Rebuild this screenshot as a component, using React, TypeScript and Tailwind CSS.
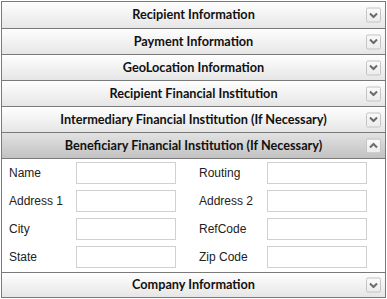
import React from "react";

type Section = { title: string; open?: boolean; first?: boolean };

function Chevron({ up }: { up?: boolean }) {
  return (
    <span className="absolute right-[4px] top-1/2 -translate-y-1/2 flex h-[15px] w-[15px] items-center justify-center rounded-[2px] border border-[#c4c4c4] bg-[linear-gradient(#fafafa,#ececec)]">
      <svg width="9" height="6" viewBox="0 0 9 6">
        {up ? (
          <path d="M1 5 L4.5 1.5 L8 5" fill="none" stroke="#6a6a6a" strokeWidth="2" />
        ) : (
          <path d="M1 1 L4.5 4.5 L8 1" fill="none" stroke="#6a6a6a" strokeWidth="2" />
        )}
      </svg>
    </span>
  );
}

function Header({ title, open, first }: Section) {
  return (
    <div
      className={`relative flex items-center justify-center border-b border-[#7a7a7a] ${
        first ? "h-[27px]" : "h-[26px]"
      } ${
        open
          ? "bg-[linear-gradient(#e2e2e2,#c2c2c2)]"
          : "bg-[linear-gradient(#fefefe,#e6e6e6)]"
      }`}
    >
      <span className="text-[12.7px] font-bold text-[#111] font-['Lato',sans-serif]">
        {title}
      </span>
      <Chevron up={open} />
    </div>
  );
}

const rows = [
  ["Name", "Routing"],
  ["Address 1", "Address 2"],
  ["City", "RefCode"],
  ["State", "Zip Code"],
];

export default function App() {
  return (
    <div className="bg-white pt-px h-[299px]">
      <div className="mx-px border-x border-t border-[#7a7a7a]">
        <Header title="Recipient Information" first />
        <Header title="Payment Information" />
        <Header title="GeoLocation Information" />
        <Header title="Recipient Financial Institution" />
        <Header title="Intermediary Financial Institution (If Necessary)" />
        <Header title="Beneficiary Financial Institution (If Necessary)" open />

        {/* form */}
        <div className="flex flex-col gap-[6px] pt-[3px] pb-[4px] border-b border-[#7a7a7a] font-['Liberation_Sans',Arial,sans-serif] text-[12px] text-[#222]">
          {rows.map(([a, b]) => (
            <div key={a} className="flex items-center h-[22px]">
              <span className="w-[74px] pl-[7px]">{a}</span>
              <span className="h-[22px] w-[100px] border border-[#d0d0d0] bg-white" />
              <span className="w-[91px] pl-[23px]">{b}</span>
              <span className="h-[22px] w-[100px] border border-[#d0d0d0] bg-white" />
            </div>
          ))}
        </div>

        <div className="relative flex items-center justify-center border-b border-[#7a7a7a] h-[25px] bg-[linear-gradient(#fefefe,#e6e6e6)]">
          <span className="text-[12.7px] font-bold text-[#111] font-['Lato',sans-serif]">
            Company Information
          </span>
          <Chevron />
        </div>
      </div>
    </div>
  );
}
